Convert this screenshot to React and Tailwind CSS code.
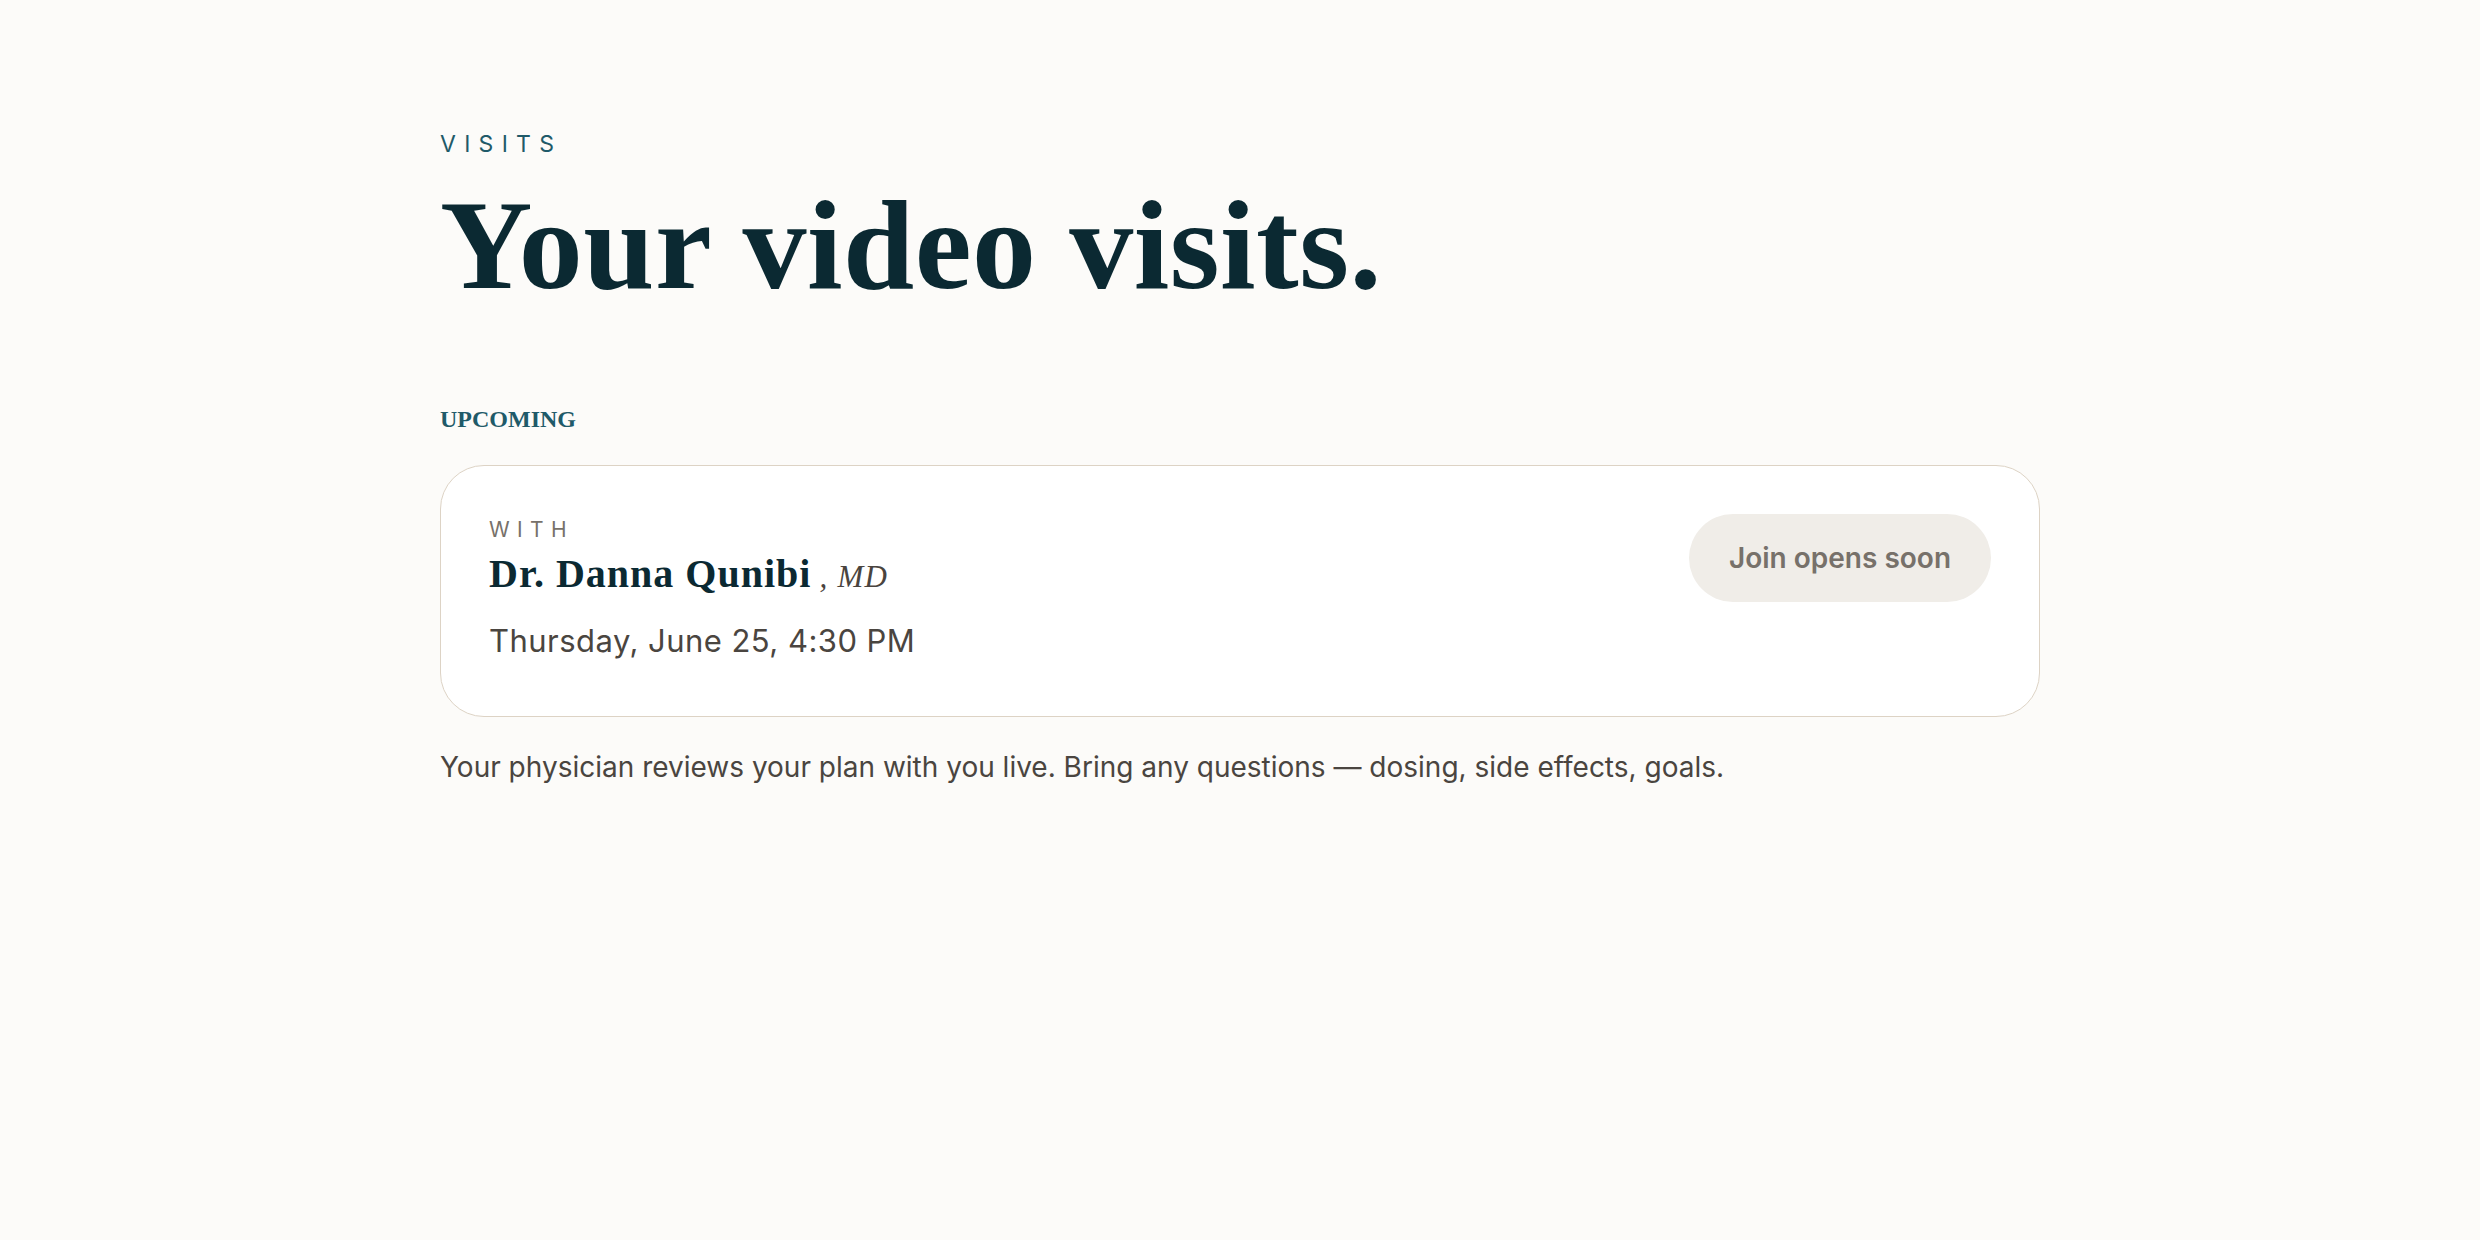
export default function App() {
  return (
    <div className="min-h-screen w-full bg-[#fcfbf9]">
      <main className="mx-auto w-[1600px] pt-[127px] pb-20">
        <div className="font-['Inter','Liberation_Sans',sans-serif] text-[23px] leading-[1.5] tracking-[0.36em] text-[#1f5a69]">
          VISITS
        </div>
        <h1 className="mt-[19px] font-['Liberation_Serif','Times_New_Roman',serif] text-[128px] leading-none font-bold tracking-[0.004em] text-[#0b2932]">
          Your video visits.
        </h1>

        <h2 className="mt-[92px] font-['Liberation_Serif','Times_New_Roman',serif] text-[24px] leading-[1.5] font-bold text-[#1f5a69]">
          UPCOMING
        </h2>

        <section className="mt-[28px] flex items-start justify-between rounded-[44px] border-[1.5px] border-[#ddd3c5] bg-white px-12 pt-12 pb-[51px]">
          <div className="flex flex-col">
            <div className="font-['Inter','Liberation_Sans',sans-serif] text-[21px] leading-[1.5] tracking-[0.35em] text-[#77716a]">
              WITH
            </div>
            <div className="mt-[5px] flex items-baseline font-['Liberation_Serif','Times_New_Roman',serif] leading-[1.2]">
              <span className="text-[40px] font-bold tracking-[0.025em] text-[#0b2932]">Dr. Danna Qunibi</span>
              <span className="ml-[8px] text-[31px] italic tracking-[0.04em] text-[#4a443e]">, MD</span>
            </div>
            <div className="mt-[20px] font-['Inter','Liberation_Sans',sans-serif] text-[31px] leading-[1.5] tracking-[0.015em] text-[#4a4540]">
              Thursday, June 25, 4:30 PM
            </div>
          </div>
          <button
            type="button"
            className="flex h-[88px] w-[302px] items-center justify-center rounded-full bg-[#f0ede8] font-['Inter','Liberation_Sans',sans-serif] text-[28px] font-semibold text-[#77716a]"
          >
            Join opens soon
          </button>
        </section>

        <p className="mt-[28px] font-['Inter','Liberation_Sans',sans-serif] text-[28px] leading-[1.6] text-[#4a4540]">
          Your physician reviews your plan with you live. Bring any questions — dosing, side effects, goals.
        </p>
      </main>
    </div>
  );
}
